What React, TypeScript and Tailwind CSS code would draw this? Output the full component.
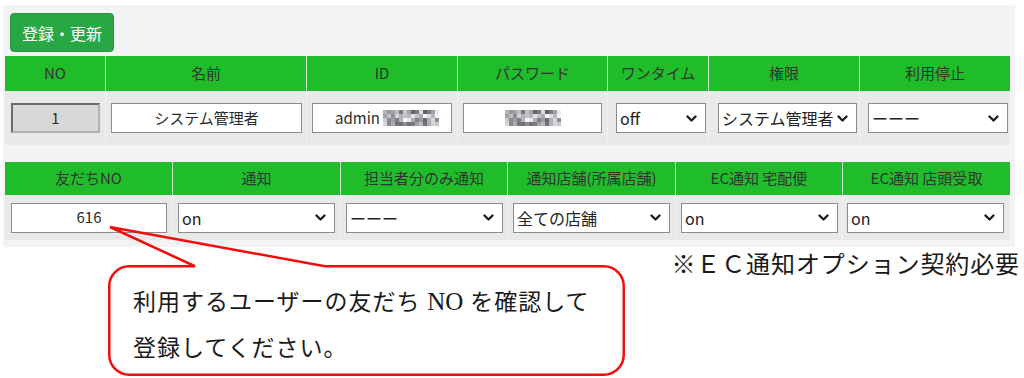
import React from 'react';

const SANS = "font-['Noto_Sans_CJK_JP','Noto_Sans',sans-serif]";

// 伏せ字のモザイク（固定パターン）
const mosaicCells = Array.from({ length: 4 * 14 }, (_, i) => {
  const v = Math.abs(Math.sin((i + 3) * 12.9898) * 43758.5453) % 1;
  return Math.round(95 + v * 150);
});

function Mosaic() {
  return (
    <svg width="56" height="16" viewBox="0 0 56 16" className="block">
      {mosaicCells.map((g, i) => (
        <rect key={i} x={(i % 14) * 4} y={Math.floor(i / 14) * 4} width="4" height="4" fill={`rgb(${g},${g},${g + 6})`} />
      ))}
    </svg>
  );
}

function Chevron() {
  return (
    <svg width="11" height="7" viewBox="0 0 11 7" className="shrink-0">
      <path d="M1.5 1.5L5.5 5.5L9.5 1.5" fill="none" stroke="#1a1a1a" strokeWidth="2.3" strokeLinecap="round" strokeLinejoin="round" />
    </svg>
  );
}

function Select({ label, className }: { label: string; className: string }) {
  return (
    <div className={`h-[30px] bg-white border border-[#8d8d8d] flex items-center justify-between pl-[3px] pr-[8px] text-[16px] text-[#222] ${className}`}>
      <span className="whitespace-nowrap">{label}</span>
      <Chevron />
    </div>
  );
}

function TextBox({ children, className }: { children: React.ReactNode; className: string }) {
  return (
    <div className={`h-[30px] bg-white border border-[#8d8d8d] flex items-center justify-center text-[15px] text-[#2b2b2b] ${className}`}>
      {children}
    </div>
  );
}

const head1 = ['NO', '名前', 'ID', 'パスワード', 'ワンタイム', '権限', '利用停止'];
const head2 = ['友だちNO', '通知', '担当者分のみ通知', '通知店舗(所属店舗)', 'EC通知 宅配便', 'EC通知 店頭受取'];

export default function App() {
  return (
    <div className={`w-[1024px] h-[378px] bg-white overflow-hidden ${SANS}`}>
      <div className="pt-[5px] pl-[3px]">
        <div className="w-[1012px] bg-[#f3f3f3] pl-[2px] pt-[8px] pb-[7px]">
          <button className="ml-[5px] w-[104px] h-[39px] rounded-[4px] bg-[#28a745] border border-[#24963e] text-white text-[16px] flex items-center justify-center">
            登録・更新
          </button>

          {/* 基本情報 */}
          <div className="mt-[4px] w-[1005px] grid grid-cols-[100px_201px_151px_150px_101px_151px_151px]">
            {head1.map((h, i) => (
              <div key={h} className={`h-[35px] bg-[#20bd2b] flex items-center justify-center text-[15px] text-[#333] ${i > 0 ? 'border-l border-[#d6e6d6]' : ''}`}>
                {h}
              </div>
            ))}
            <div className="h-[54px] bg-[#e9e9e9] flex items-center">
              <div className="ml-[6px] w-[89px] h-[30px] bg-[#d8d8d8] border-2 border-t-[#6a6a6a] border-l-[#6a6a6a] border-b-[#b0b0b0] border-r-[#b0b0b0] flex items-center justify-center text-[15px] text-[#2b2b2b]">
                1
              </div>
            </div>
            <div className="h-[54px] bg-[#e9e9e9] border-l border-[#f1f1f1] flex items-center">
              <TextBox className="ml-[5px] w-[191px]">システム管理者</TextBox>
            </div>
            <div className="h-[54px] bg-[#e9e9e9] border-l border-[#f1f1f1] flex items-center">
              <TextBox className="ml-[5px] w-[140px] gap-[3px] pl-[10px]">
                <span>admin</span>
                <Mosaic />
              </TextBox>
            </div>
            <div className="h-[54px] bg-[#e9e9e9] border-l border-[#f1f1f1] flex items-center">
              <TextBox className="ml-[5px] w-[139px]">
                <Mosaic />
              </TextBox>
            </div>
            <div className="h-[54px] bg-[#e9e9e9] border-l border-[#f1f1f1] flex items-center">
              <Select label="off" className="ml-[8px] w-[90px]" />
            </div>
            <div className="h-[54px] bg-[#e9e9e9] border-l border-[#f1f1f1] flex items-center">
              <Select label="システム管理者" className="ml-[9px] w-[139px] pr-[5px]" />
            </div>
            <div className="h-[54px] bg-[#e9e9e9] border-l border-[#f1f1f1] flex items-center">
              <Select label="ーーー" className="ml-[8px] w-[140px]" />
            </div>
          </div>

          {/* 通知設定 */}
          <div className="mt-[17px] w-[1005px] grid grid-cols-[167px_168px_167px_168px_167px_168px]">
            {head2.map((h, i) => (
              <div key={h} className={`h-[33px] bg-[#20bd2b] flex items-center justify-center text-[15px] text-[#333] ${i > 0 ? 'border-l border-[#d6e6d6]' : ''}`}>
                {h}
              </div>
            ))}
            <div className="h-[45px] bg-[#e9e9e9] flex items-center">
              <TextBox className="ml-[6px] w-[156px]">616</TextBox>
            </div>
            <div className="h-[45px] bg-[#e9e9e9] border-l border-[#f1f1f1] flex items-center">
              <Select label="on" className="ml-[5px] w-[157px]" />
            </div>
            <div className="h-[45px] bg-[#e9e9e9] border-l border-[#f1f1f1] flex items-center">
              <Select label="ーーー" className="ml-[5px] w-[157px]" />
            </div>
            <div className="h-[45px] bg-[#e9e9e9] border-l border-[#f1f1f1] flex items-center">
              <Select label="全ての店舗" className="ml-[5px] w-[157px]" />
            </div>
            <div className="h-[45px] bg-[#e9e9e9] border-l border-[#f1f1f1] flex items-center">
              <Select label="on" className="ml-[5px] w-[157px]" />
            </div>
            <div className="h-[45px] bg-[#e9e9e9] border-l border-[#f1f1f1] flex items-center">
              <Select label="on" className="ml-[4px] w-[157px]" />
            </div>
          </div>
        </div>
      </div>

      {/* 吹き出しと注記 */}
      <div className="flex items-start">
        <div className="relative ml-[108px] mt-[18px] w-[517px] h-[111px]">
          <svg width="517" height="151" viewBox="0 -40 517 151" className="absolute left-0 top-[-40px] overflow-visible">
            <path
              d="M217 1.25L495.75 1.25A20 20 0 0 1 515.75 21.25L515.75 89.75A20 20 0 0 1 495.75 109.75L21.25 109.75A20 20 0 0 1 1.25 89.75L1.25 21.25A20 20 0 0 1 21.25 1.25L87 1.25L2 -38L217 1.25"
              fill="none"
              stroke="#f20d0d"
              strokeWidth="2.5"
              strokeLinejoin="miter"
            />
          </svg>
          <div className="relative pl-[25px] pt-[14px] text-[23px] leading-[46px] tracking-[1px] text-[#1a1a1a] font-['Liberation_Serif','Noto_Sans_CJK_JP',serif]">
            <div>
              利用するユーザーの友だち <span className="text-[25px] tracking-normal">NO</span> を確認して
            </div>
            <div>登録してください。</div>
          </div>
        </div>
        <div className="ml-auto mr-[4px] mt-[6px] text-[24px] leading-[24px] tracking-[0.9px] text-[#1a1a1a] font-['Liberation_Serif','Noto_Sans_CJK_JP',serif] whitespace-nowrap">
          ※ＥＣ通知オプション契約必要
        </div>
      </div>
    </div>
  );
}
